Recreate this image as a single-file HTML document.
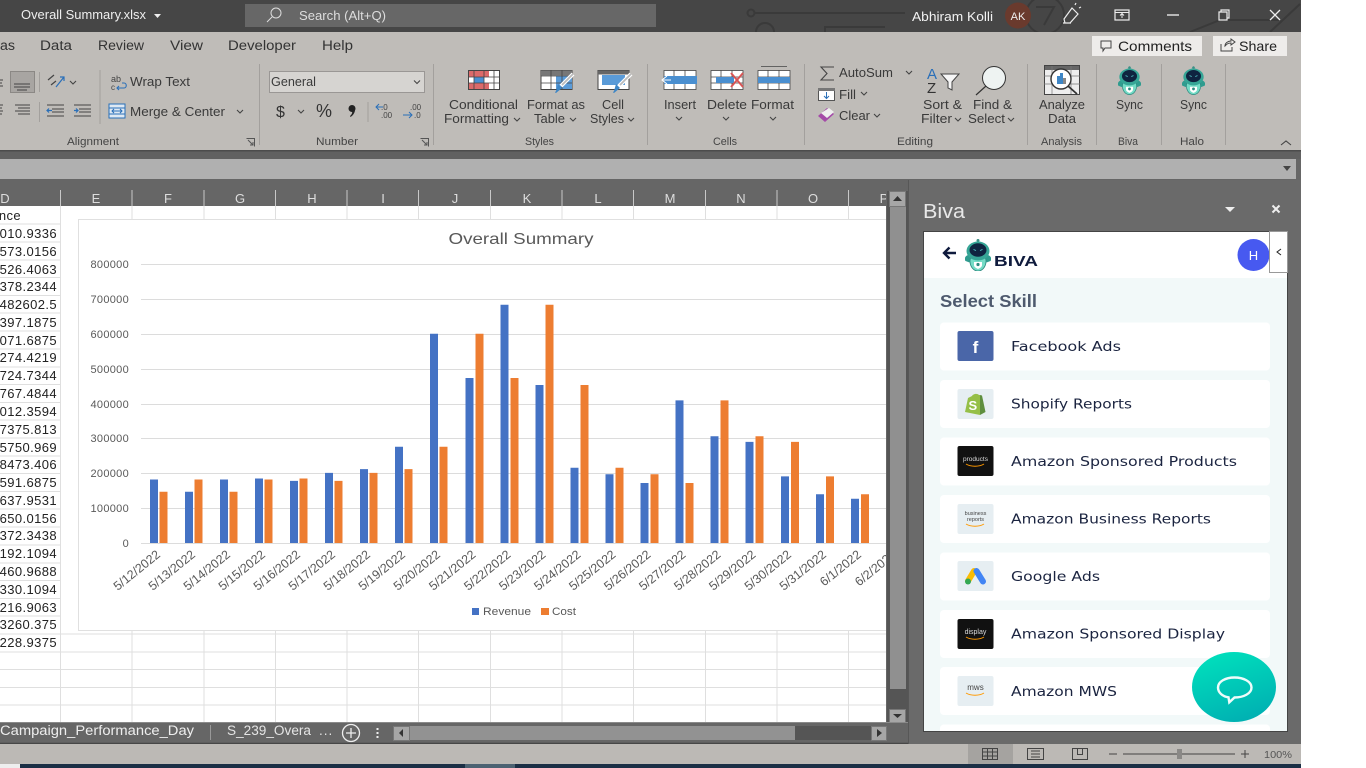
<!DOCTYPE html>
<html><head><meta charset="utf-8"><title>Overall Summary.xlsx</title>
<style>
html,body{margin:0;padding:0;background:#fff;overflow:hidden}
svg{display:block;font-family:"Liberation Sans",sans-serif}
.r{fill:#3a3a3a;font-size:12.5px}
.g{fill:#444;font-size:11px}
.tab{fill:#333;font-size:13.5px}
.cell{fill:#222;font-size:13px;letter-spacing:.4px;text-anchor:end}
.hd{fill:#ddd;font-size:13px;text-anchor:middle}
.yl{fill:#595959;font-size:11px;text-anchor:end;letter-spacing:.3px}
.dt{fill:#595959;font-size:12.5px;text-anchor:end}
.sk{fill:#1b2440;font-family:"DejaVu Sans",sans-serif;font-size:13.5px}
.ch{fill:none;stroke:#444;stroke-width:1.1}
</style></head><body>
<svg width="1366" height="768" viewBox="0 0 1366 768" xmlns="http://www.w3.org/2000/svg">
<defs>
<path id="c" class="ch" d="M0 0l3 3 3-3"/>
<linearGradient id="fab" x1="0.3" y1="0" x2="0.7" y2="1"><stop offset="0" stop-color="#00dfbc"/><stop offset="1" stop-color="#00afb2"/></linearGradient>
<symbol id="bot" viewBox="0 0 26 32">
<path d="M13 0v4" stroke="#3e8f86" stroke-width="1.2"/><circle cx="13" cy="1.5" r="1.5" fill="#3e8f86"/>
<path d="M3 16c-3 1-4 4-2.500 6l4 1.500 2-6zM23 16c3 1 4 4 2.500 6l-4 1.500-2-6z" fill="#2f9c8f"/>
<path d="M5.500 19h15c2 7-2.500 13-7.500 13S3.500 26 5.500 19z" fill="#74dcc6" stroke="#2d8a80" stroke-width=".8"/>
<ellipse cx="13" cy="12" rx="11.500" ry="9.500" fill="#36a596"/>
<ellipse cx="13" cy="11" rx="8.500" ry="6.800" fill="#0f2440"/>
<path d="M8.500 10.500l2.500 1M17.500 10.500l-2.500 1" stroke="#5cc" stroke-width=".9"/>
<path d="M9 23h8v3c0 2-2 3-4 4-2-1-4-2-4-4z" fill="#fff"/><circle cx="13" cy="25.500" r="1.600" fill="#2d8a80"/>
</symbol>
</defs>

<rect width="1366" height="768" fill="#fff"/>
<!-- title bar -->
<rect width="1301" height="32" fill="#464646"/>
<g fill="none" stroke="#3a3a3a" stroke-width="2">
<path d="M755 13H905M825 32V27h60M1190 32l30-12h60M1270 32l30-28"/>
<circle cx="751" cy="13" r="3.500"/><circle cx="765" cy="32" r="9"/><circle cx="1045" cy="15" r="19"/><path d="M1036 7h18l-10 18"/>
</g>
<rect x="245" y="4" width="411" height="23" fill="#676767"/>
<circle cx="276" cy="13" r="5" fill="none" stroke="#ddd" stroke-width="1"/><path d="M272 17l-5 5" stroke="#ddd" stroke-width="1"/>
<text x="21" y="19" fill="#eee" font-size="12.500" textLength="125" lengthAdjust="spacingAndGlyphs">Overall Summary.xlsx</text>
<path d="M154 14h7l-3.500 4z" fill="#eee"/>
<text x="299" y="20" fill="#ddd" font-size="12.500" textLength="87" lengthAdjust="spacingAndGlyphs">Search (Alt+Q)</text>
<text x="912" y="21" fill="#f2f2f2" font-size="12.500" textLength="81" lengthAdjust="spacingAndGlyphs">Abhiram Kolli</text>
<circle cx="1018" cy="15.500" r="13" fill="#6a3a2d"/>
<text x="1018" y="20" fill="#eee" font-size="11" text-anchor="middle">AK</text>
<path d="M1064 19l8-11 6 6-8 9h-5zM1063 23l8 0M1075 5l1-2M1079 8l2-1" fill="none" stroke="#eee" stroke-width="1.200"/>
<rect x="1115" y="10" width="14" height="10" fill="none" stroke="#eee" stroke-width="1.200"/><path d="M1115 12.500h14M1122 18v-4M1120 15.500l2-2 2 2" fill="none" stroke="#eee"/>
<path d="M1167 15h12" stroke="#ddd" stroke-width="1.500"/>
<path d="M1219 12h8v8h-8zM1221 12v-2h8v8h-2" fill="none" stroke="#eee" stroke-width="1.200"/>
<path d="M1270 10l10 10M1280 10l-10 10" stroke="#eee" stroke-width="1.300"/>

<!-- ribbon -->
<rect y="32" width="1301" height="118" fill="#bfbcb8"/>
<text x="0" y="50" class="tab" textLength="15" lengthAdjust="spacingAndGlyphs">as</text>
<text x="40" y="50" class="tab" textLength="32" lengthAdjust="spacingAndGlyphs">Data</text>
<text x="98" y="50" class="tab" textLength="46" lengthAdjust="spacingAndGlyphs">Review</text>
<text x="170" y="50" class="tab" textLength="33" lengthAdjust="spacingAndGlyphs">View</text>
<text x="228" y="50" class="tab" textLength="68" lengthAdjust="spacingAndGlyphs">Developer</text>
<text x="322" y="50" class="tab" textLength="31" lengthAdjust="spacingAndGlyphs">Help</text>

<rect x="1092" y="36" width="110" height="20" fill="#eeecea"/>
<rect x="1213" y="36" width="74" height="20" fill="#eeecea"/>
<path d="M1101 41h10v7h-6l-2 3v-3h-2z" fill="none" stroke="#444"/>
<path d="M1221 44v7h11v-4M1225 46c0-3 3-5 6-5v-2l4 3-4 3v-2c-3 0-4 1-6 3z" fill="none" stroke="#444"/>
<text x="1118" y="51" fill="#222" font-size="14" textLength="74" lengthAdjust="spacingAndGlyphs">Comments</text>
<text x="1239" y="51" fill="#222" font-size="14" textLength="38" lengthAdjust="spacingAndGlyphs">Share</text>

<g stroke="#a3a09d" stroke-width="1">
<path d="M39.500 72v20M39.500 102v20M100 70v54M259.500 64v81M368 102v20M433.500 64v81M647.500 64v81M804.500 64v81M1027.500 64v81M1096.500 64v81M1161.500 64v81M1225.500 64v81"/>
</g>

<!-- alignment -->
<rect x="10.500" y="71.500" width="24" height="21" fill="#a8a5a2" stroke="#8b8885"/>
<path d="M14 84h16M14 87h16M17 90h10M0 80h3M0 83h2M0 86h3" stroke="#444" stroke-width="1"/>
<path d="M0 105h3M0 108h2M0 111h3M0 114h2M15 105h15M18 108h12M15 111h15M18 114h12" stroke="#444" stroke-width="1"/>
<path d="M47 105h17M52 109h12M52 112h12M47 116h17M74 105h17M79 109h12M79 112h12M74 116h17" stroke="#444"/>
<path d="M52 110.500h-5M49 108.500l-2 2 2 2M78 110.500h-4M76 108.500l2 2-2 2" stroke="#2a6fb8" fill="none" stroke-width="1.200"/>
<path d="M48 80l6-5M51 85l5-4" stroke="#444" stroke-width="1.200"/><path d="M56 87l8-10M60 77h4v4" stroke="#2a6fb8" fill="none" stroke-width="1.200"/>
<use href="#c" x="70" y="81"/>
<text x="111" y="82" fill="#444" font-size="9">ab</text><text x="111" y="90" fill="#444" font-size="8">c</text>
<path d="M117 88h7c3 0 3-5 0-5h-2M119 86l-2 2 2 2" fill="none" stroke="#2a6fb8" stroke-width="1.100"/>
<text x="130" y="86" class="r" textLength="60" lengthAdjust="spacingAndGlyphs">Wrap Text</text>
<rect x="109" y="104" width="16" height="14" fill="#dfe9f3" stroke="#2a6fb8"/><path d="M109 108h16M109 114h16" stroke="#2a6fb8"/><path d="M112 111h10M114 109l-2 2 2 2M120 109l2 2-2 2" stroke="#2a6fb8" fill="none"/>
<text x="130" y="116" class="r" textLength="95" lengthAdjust="spacingAndGlyphs">Merge &amp; Center</text>
<use href="#c" x="237" y="110"/>
<text x="67" y="145" class="g" textLength="52" lengthAdjust="spacingAndGlyphs">Alignment</text>
<path d="M246.500 138.500h8v8M248 140l5 5M250 145h3v-3" fill="none" stroke="#555"/>

<!-- number -->
<rect x="269.500" y="71.500" width="155" height="21" fill="#d6d4d1" stroke="#9a9795"/>
<text x="271" y="86" class="r" textLength="45" lengthAdjust="spacingAndGlyphs">General</text>
<use href="#c" x="414" y="80.500"/>
<text x="276" y="117" fill="#333" font-size="16">$</text><use href="#c" x="298" y="110"/>
<text x="316" y="117" fill="#333" font-size="18">%</text>
<circle cx="352" cy="108.500" r="3.500" fill="#222"/><path d="M355 108c.5 4-1.500 7-4.500 9l-.5-1c2-1.500 2.500-3.500 2-5z" fill="#222"/>
<text x="381" y="110" fill="#444" font-size="8">.0</text><text x="381" y="118" fill="#444" font-size="8">.00</text>
<path d="M383 107h-7M379 104l-3 3 3 3" fill="none" stroke="#2a6fb8"/>
<text x="410" y="110" fill="#444" font-size="8">.00</text><text x="414" y="118" fill="#444" font-size="8">.0</text>
<path d="M403 115h9M409 112l3 3-3 3" fill="none" stroke="#2a6fb8"/>
<text x="316" y="145" class="g" textLength="42" lengthAdjust="spacingAndGlyphs">Number</text>
<path d="M420.500 138.500h8v8M422 140l5 5M424 145h3v-3" fill="none" stroke="#555"/>

<!-- styles -->
<rect x="468.500" y="70.500" width="31" height="19" fill="#fff" stroke="#444"/>
<rect x="469" y="71" width="20" height="6" fill="#dc6a6a"/><rect x="474" y="77" width="10" height="6" fill="#4a8fd0"/><rect x="469" y="83" width="20" height="6" fill="#dc6a6a"/>
<path d="M474 70v20M484 70v20M494 70v20M468 77h31M468 83h31" stroke="#444" stroke-width=".8"/>
<rect x="541" y="70.500" width="31" height="19" fill="#fff" stroke="#444"/><rect x="541" y="70.500" width="31" height="5" fill="#777"/>
<rect x="556" y="76" width="16" height="13" fill="#5a9bd8"/>
<path d="M551 70v20M562 70v20M541 76h31M541 83h31" stroke="#444" stroke-width=".8"/>
<path d="M573 74l-12 12" stroke="#fff" stroke-width="4"/><path d="M573 74l-11 11" stroke="#bbb" stroke-width="1.800"/><path d="M558 84l4 4-6 5c-1 0-1-1 0-2z" fill="#3e86c6"/>
<rect x="598" y="70.500" width="31" height="19" fill="#fff" stroke="#444"/><rect x="598" y="70.500" width="31" height="4" fill="#666"/>
<rect x="602" y="75" width="23" height="10" fill="#5a9bd8"/>
<path d="M631 74l-12 12" stroke="#fff" stroke-width="4"/><path d="M631 74l-11 11" stroke="#bbb" stroke-width="1.800"/><path d="M616 84l4 4-6 5c-1 0-1-1 0-2z" fill="#3e86c6"/>
<text x="449" y="109" class="r" textLength="69" lengthAdjust="spacingAndGlyphs">Conditional</text>
<text x="444" y="123" class="r" textLength="65" lengthAdjust="spacingAndGlyphs">Formatting</text><use href="#c" x="514" y="118"/>
<text x="527" y="109" class="r" textLength="58" lengthAdjust="spacingAndGlyphs">Format as</text>
<text x="534" y="123" class="r" textLength="31" lengthAdjust="spacingAndGlyphs">Table</text><use href="#c" x="570" y="118"/>
<text x="602" y="109" class="r" textLength="22" lengthAdjust="spacingAndGlyphs">Cell</text>
<text x="590" y="123" class="r" textLength="34" lengthAdjust="spacingAndGlyphs">Styles</text><use href="#c" x="628" y="118"/>
<text x="525" y="145" class="g" textLength="29" lengthAdjust="spacingAndGlyphs">Styles</text>

<!-- cells -->
<g stroke="#444" stroke-width=".8">
<rect x="664" y="70.500" width="32" height="19" fill="#fff"/><path d="M664 77h32M664 83h32M674 70v20M685 70v20"/>
<rect x="711" y="70.500" width="32" height="19" fill="#fff"/><path d="M711 77h32M711 83h32M721 70v20M732 70v20"/>
<rect x="758" y="70.500" width="32" height="19" fill="#fff"/><path d="M758 77h32M758 83h32M768 70v20M779 70v20M761 66.500h26"/>
</g>
<path d="M664 76h33v8h-33z" fill="#4a8fd0"/><path d="M671 80h-8M667 76l-5 4 5 4" fill="none" stroke="#fff"/>
<path d="M716 77h18v6h-18z" fill="#4a8fd0"/><path d="M731 73l12 14M743 73l-12 14" stroke="#d85555" stroke-width="2"/>
<path d="M758 77h32v6h-32z" fill="#4a8fd0"/>
<text x="664" y="109" class="r" textLength="32" lengthAdjust="spacingAndGlyphs">Insert</text><use href="#c" x="676" y="117"/>
<text x="707" y="109" class="r" textLength="40" lengthAdjust="spacingAndGlyphs">Delete</text><use href="#c" x="723" y="117"/>
<text x="751" y="109" class="r" textLength="43" lengthAdjust="spacingAndGlyphs">Format</text><use href="#c" x="770" y="117"/>
<text x="713" y="145" class="g" textLength="24" lengthAdjust="spacingAndGlyphs">Cells</text>

<!-- editing -->
<path d="M834 67h-13l6 6.500-6 6.500h13" fill="none" stroke="#444" stroke-width="1.100"/>
<text x="839" y="77" class="r" textLength="54" lengthAdjust="spacingAndGlyphs">AutoSum</text><use href="#c" x="906" y="71"/>
<rect x="818.500" y="88.500" width="16" height="12" fill="#fff" stroke="#555"/><rect x="818" y="88" width="17" height="3" fill="#777"/><path d="M826.500 92v6M824 96l2.500 2.500 2.500-2.500" fill="none" stroke="#2a6fb8"/>
<text x="839" y="99" class="r" textLength="17" lengthAdjust="spacingAndGlyphs">Fill</text><use href="#c" x="861" y="92"/>
<path d="M818 116l9-8 7 6-9 8z" fill="#a44aa8"/><path d="M821 113l6 5 7-6-5-4z" fill="#eee"/>
<text x="839" y="120" class="r" textLength="31" lengthAdjust="spacingAndGlyphs">Clear</text><use href="#c" x="874" y="114"/>
<text x="927" y="79" fill="#2a6fb8" font-size="15">A</text><text x="927" y="93" fill="#333" font-size="15">Z</text>
<path d="M941 74h18l-7 8v8l-4-2v-6z" fill="#f6f6f6" stroke="#444"/>
<circle cx="994" cy="78" r="11.500" fill="#eef3f2" stroke="#333"/><path d="M986 86l-10 9" stroke="#333" stroke-width="1.200"/>
<text x="923" y="109" class="r" textLength="39" lengthAdjust="spacingAndGlyphs">Sort &amp;</text>
<text x="921" y="123" class="r" textLength="31" lengthAdjust="spacingAndGlyphs">Filter</text><use href="#c" x="955" y="118"/>
<text x="973" y="109" class="r" textLength="39" lengthAdjust="spacingAndGlyphs">Find &amp;</text>
<text x="968" y="123" class="r" textLength="37" lengthAdjust="spacingAndGlyphs">Select</text><use href="#c" x="1008" y="118"/>
<text x="897" y="145" class="g" textLength="36" lengthAdjust="spacingAndGlyphs">Editing</text>

<!-- analyze -->
<rect x="1044.500" y="65.500" width="35" height="29" fill="#eee" stroke="#444"/><rect x="1045" y="66" width="34" height="4" fill="#666"/>
<path d="M1044 76h36M1044 84h36M1052 66v28M1071 66v28" stroke="#777" stroke-width=".7"/>
<circle cx="1061" cy="79" r="10" fill="#fff" stroke="#333" stroke-width="1.400"/>
<path d="M1057 76h3v8h-3zM1060 73h3v11h-3z" fill="#3e86c6"/><path d="M1063 78h3v6h-3z" fill="#888"/>
<path d="M1068 86l9 8" stroke="#333" stroke-width="1.800"/>
<text x="1039" y="109" class="r" textLength="46" lengthAdjust="spacingAndGlyphs">Analyze</text>
<text x="1048" y="123" class="r" textLength="28" lengthAdjust="spacingAndGlyphs">Data</text>
<text x="1041" y="145" class="g" textLength="41" lengthAdjust="spacingAndGlyphs">Analysis</text>

<use href="#bot" x="1118" y="66" width="23" height="29"/>
<use href="#bot" x="1182" y="66" width="23" height="29"/>
<text x="1116" y="109" class="r" textLength="27" lengthAdjust="spacingAndGlyphs">Sync</text>
<text x="1180" y="109" class="r" textLength="27" lengthAdjust="spacingAndGlyphs">Sync</text>
<text x="1118" y="145" class="g" textLength="20" lengthAdjust="spacingAndGlyphs">Biva</text>
<text x="1180" y="145" class="g" textLength="24" lengthAdjust="spacingAndGlyphs">Halo</text>
<path d="M1281 145l5-4 5 4" fill="none" stroke="#444" stroke-width="1.100"/>

<!-- dark band + formula -->
<rect y="150" width="1301" height="594" fill="#666"/>
<rect y="150" width="1301" height="1.500" fill="#4c4c4c"/>
<rect y="151.500" width="1301" height="7.500" fill="#616161"/>
<rect y="159" width="1296" height="20" fill="#b0b0b0"/>
<path d="M1283 166h8l-4 5z" fill="#444"/>

<!-- headers -->
<rect y="180" width="886" height="26" fill="#666"/>
<path d="M60.500 190v16M132 190v16M204 190v16M275.500 190v16M347 190v16M418.500 190v16M490.500 190v16M562 190v16M633.500 190v16M705.500 190v16M777 190v16M848.500 190v16" stroke="#c8c8c8" stroke-width="1"/>
<g class="hd"><text x="5" y="203" class="hd">D</text><text x="96" y="203" class="hd">E</text><text x="168" y="203" class="hd">F</text><text x="240" y="203" class="hd">G</text><text x="312" y="203" class="hd">H</text><text x="383" y="203" class="hd">I</text><text x="455" y="203" class="hd">J</text><text x="527" y="203" class="hd">K</text><text x="598" y="203" class="hd">L</text><text x="670" y="203" class="hd">M</text><text x="741" y="203" class="hd">N</text><text x="813" y="203" class="hd">O</text><text x="884" y="203" class="hd">P</text></g>
<rect x="886" y="180" width="23" height="26" fill="#666"/>

<!-- grid -->
<rect y="206" width="886" height="516" fill="#fff"/>
<path d="M0 224h60M0 242h60M0 260h60M0 277.500h60M0 295.500h60M0 313h60M0 331h60M0 349h60M0 367h60M0 384.500h60M0 402.500h60M0 420h60M0 438h60M0 456h60M0 473.500h60M0 491.500h60M0 509h60M0 527h60M0 545h60M0 563h60M0 580.500h60M0 598.500h60M0 616h60M0 634h886M0 652h886M0 669.500h886M0 687.500h886M0 705h886" stroke="#dfdfdf" fill="none"/>
<path d="M60.500 206v516M132 206v516M204 206v516M275.500 206v516M347 206v516M418.500 206v516M490.500 206v516M562 206v516M633.500 206v516M705.500 206v516M777 206v516M848.500 206v516" stroke="#dfdfdf"/>

<g>
<text x="21" y="220" class="cell">nce</text>
<text x="57" y="238" class="cell">010.9336</text>
<text x="57" y="256" class="cell">573.0156</text>
<text x="57" y="274" class="cell">526.4063</text>
<text x="57" y="291" class="cell">378.2344</text>
<text x="57" y="309" class="cell">482602.5</text>
<text x="57" y="327" class="cell">397.1875</text>
<text x="57" y="345" class="cell">071.6875</text>
<text x="57" y="362" class="cell">274.4219</text>
<text x="57" y="380" class="cell">724.7344</text>
<text x="57" y="398" class="cell">767.4844</text>
<text x="57" y="416" class="cell">012.3594</text>
<text x="57" y="434" class="cell">7375.813</text>
<text x="57" y="452" class="cell">5750.969</text>
<text x="57" y="469" class="cell">8473.406</text>
<text x="57" y="487" class="cell">591.6875</text>
<text x="57" y="505" class="cell">637.9531</text>
<text x="57" y="523" class="cell">650.0156</text>
<text x="57" y="540" class="cell">372.3438</text>
<text x="57" y="558" class="cell">192.1094</text>
<text x="57" y="576" class="cell">460.9688</text>
<text x="57" y="594" class="cell">330.1094</text>
<text x="57" y="612" class="cell">216.9063</text>
<text x="57" y="629" class="cell">3260.375</text>
<text x="57" y="647" class="cell">228.9375</text>
</g>

<!-- chart -->
<svg x="0" y="0" width="886" height="768" overflow="hidden">
<rect x="78.500" y="219.500" width="830" height="411" fill="#fff" stroke="#e0e0e0"/>
<path d="M141 264.500h745M141 299.500h745M141 334.500h745M141 369.500h745M141 404.500h745M141 438.500h745M141 473.500h745M141 508.500h745M141 543.500h745" stroke="#dcdcdc"/>
<text x="521" y="244" fill="#595959" font-size="16" text-anchor="middle" textLength="145" lengthAdjust="spacingAndGlyphs">Overall Summary</text>
<text x="129" y="268" class="yl">800000</text><text x="129" y="303" class="yl">700000</text><text x="129" y="338" class="yl">600000</text><text x="129" y="373" class="yl">500000</text><text x="129" y="408" class="yl">400000</text><text x="129" y="442" class="yl">300000</text><text x="129" y="477" class="yl">200000</text><text x="129" y="512" class="yl">100000</text><text x="129" y="547" class="yl">0</text>
<path fill="#4472c4" d="M150 479.500h8V543h-8zM185 491.700h8V543h-8zM220 479.500h8V543h-8zM255 478.500h8V543h-8zM290 480.900h8V543h-8zM325 472.900h8V543h-8zM360 469.100h8V543h-8zM395 446.700h8V543h-8zM430 333.700h8V543h-8zM465.500 378h8V543h-8zM500.500 304.800h8V543h-8zM535.500 385h8V543h-8zM570.500 467.700h8V543h-8zM605.500 474.300h8V543h-8zM640.500 483h8V543h-8zM675.500 400.400h8V543h-8zM710.500 436.300h8V543h-8zM745.500 441.900h8V543h-8zM781 476.400h8V543h-8zM816 494.200h8V543h-8zM851 498.700h8V543h-8z"/>
<path fill="#ed7d31" d="M159.500 491.700h8V543h-8zM194.500 479.500h8V543h-8zM229.500 491.700h8V543h-8zM264.500 479.500h8V543h-8zM299.500 478.500h8V543h-8zM334.500 480.900h8V543h-8zM369.500 472.900h8V543h-8zM404.500 469.100h8V543h-8zM439.500 446.700h8V543h-8zM475.500 333.700h8V543h-8zM510.500 378h8V543h-8zM545.500 304.800h8V543h-8zM580.500 385h8V543h-8zM615.500 467.700h8V543h-8zM650.500 474.300h8V543h-8zM685.500 483h8V543h-8zM720.500 400.400h8V543h-8zM755.500 436.300h8V543h-8zM791 441.900h8V543h-8zM826 476.400h8V543h-8zM861 494.200h8V543h-8z"/>
<g>
<text class="dt" transform="translate(161,556) rotate(-39)">5/12/2022</text>
<text class="dt" transform="translate(196,556) rotate(-39)">5/13/2022</text>
<text class="dt" transform="translate(231,556) rotate(-39)">5/14/2022</text>
<text class="dt" transform="translate(266,556) rotate(-39)">5/15/2022</text>
<text class="dt" transform="translate(301,556) rotate(-39)">5/16/2022</text>
<text class="dt" transform="translate(336,556) rotate(-39)">5/17/2022</text>
<text class="dt" transform="translate(371,556) rotate(-39)">5/18/2022</text>
<text class="dt" transform="translate(406,556) rotate(-39)">5/19/2022</text>
<text class="dt" transform="translate(441,556) rotate(-39)">5/20/2022</text>
<text class="dt" transform="translate(476.500,556) rotate(-39)">5/21/2022</text>
<text class="dt" transform="translate(511.500,556) rotate(-39)">5/22/2022</text>
<text class="dt" transform="translate(546.500,556) rotate(-39)">5/23/2022</text>
<text class="dt" transform="translate(581.500,556) rotate(-39)">5/24/2022</text>
<text class="dt" transform="translate(616.500,556) rotate(-39)">5/25/2022</text>
<text class="dt" transform="translate(651.500,556) rotate(-39)">5/26/2022</text>
<text class="dt" transform="translate(686.500,556) rotate(-39)">5/27/2022</text>
<text class="dt" transform="translate(721.500,556) rotate(-39)">5/28/2022</text>
<text class="dt" transform="translate(756.500,556) rotate(-39)">5/29/2022</text>
<text class="dt" transform="translate(792,556) rotate(-39)">5/30/2022</text>
<text class="dt" transform="translate(827,556) rotate(-39)">5/31/2022</text>
<text class="dt" transform="translate(862,556) rotate(-39)">6/1/2022</text>
<text class="dt" transform="translate(897,556) rotate(-39)">6/2/2022</text>
</g>
<rect x="472" y="608" width="7" height="7" fill="#4472c4"/><text x="483" y="615" fill="#595959" font-size="11" textLength="48" lengthAdjust="spacingAndGlyphs">Revenue</text>
<rect x="541" y="608" width="8" height="7" fill="#ed7d31"/><text x="552" y="615" fill="#595959" font-size="11" textLength="24" lengthAdjust="spacingAndGlyphs">Cost</text>
</svg>

<!-- vscroll -->
<rect x="887" y="191" width="21" height="531" fill="#555"/>
<rect x="889.500" y="191.500" width="16" height="15" fill="#a6a6a6" stroke="#777"/><path d="M893 201h9l-4.500-5z" fill="#333"/>
<rect x="890" y="207" width="16" height="482" fill="#909090"/>
<rect x="889.500" y="709.500" width="16" height="13" fill="#a6a6a6" stroke="#777"/><path d="M893 714h9l-4.500 4z" fill="#333"/>

<!-- sheet tabs -->
<rect y="722" width="909" height="22" fill="#666"/>
<path d="M0 743.500h909" stroke="#474747" stroke-width="1.500"/>
<path d="M0 722.500h909" stroke="#8a8a8a"/>
<text x="0" y="735" fill="#eee" font-size="13.500" textLength="194" lengthAdjust="spacingAndGlyphs">Campaign_Performance_Day</text>
<path d="M210.500 725v15" stroke="#999"/>
<text x="227" y="735" fill="#e5e5e5" font-size="13.500" textLength="84" lengthAdjust="spacingAndGlyphs">S_239_Overa</text>
<text x="319" y="735" fill="#e5e5e5" font-size="13.500" letter-spacing="1">...</text>
<circle cx="351" cy="733" r="8.500" fill="none" stroke="#eee" stroke-width="1.300"/><path d="M346 733h10M351 728v10" stroke="#eee" stroke-width="1.300"/>
<path d="M377.500 728v2M377.500 732v2M377.500 736v2" stroke="#eee" stroke-width="2"/>
<rect x="393" y="726" width="493" height="14" fill="#555"/>
<rect x="393.500" y="726.500" width="16" height="14" fill="#a6a6a6" stroke="#777"/><path d="M403 729v8l-4-4z" fill="#333"/>
<rect x="410" y="726" width="385" height="14" fill="#929292"/>
<rect x="871.500" y="726.500" width="15" height="14" fill="#a6a6a6" stroke="#777"/><path d="M877 729v8l5-4z" fill="#333"/>

<!-- status -->
<rect y="744" width="1301" height="20" fill="#bcb9b5"/>
<rect x="968" y="744" width="45" height="20" fill="#a5a3a0"/>
<path d="M982.500 748.500h15v11h-15zM982 752h16M982 756h16M987.500 748v12M992.500 748v12" fill="none" stroke="#444"/>
<path d="M1027.500 748.500h16v11h-16zM1031 751h9M1031 754h9M1031 757h9" fill="none" stroke="#444"/>
<path d="M1072.500 748.500h15v11h-15zM1077.500 748.500v6h5v-6" fill="none" stroke="#444"/>
<path d="M1109 754h8M1123 754h112M1241 754h8M1245 750v8" stroke="#444"/>
<rect x="1177" y="749" width="5" height="10" fill="#8a8886"/>
<text x="1264" y="758" fill="#555" font-size="10.500" textLength="28" lengthAdjust="spacingAndGlyphs">100%</text>

<!-- bottom -->
<rect x="20" y="764" width="1281" height="4" fill="#1b2f45"/>
<rect x="0" y="764" width="20" height="4" fill="#eee"/>
<rect x="465" y="764" width="50" height="4" fill="#4c6272"/>

<!-- task pane -->
<rect x="909" y="180" width="392" height="564" fill="#6a6a6a"/>
<path d="M908.500 180v564" stroke="#575757"/>
<text x="923" y="218" fill="#e8e8e8" font-size="20" textLength="42" lengthAdjust="spacingAndGlyphs">Biva</text>
<path d="M1225 207h10l-5 5z" fill="#eee"/>
<path d="M1272.500 205.500l7 7M1279.500 205.500l-7 7" stroke="#eee" stroke-width="2"/>
<rect x="923.500" y="231.500" width="364" height="500" fill="#f2f9f9" stroke="#444"/>
<rect x="924" y="232" width="363" height="46" fill="#fff"/>
<path d="M956 253h-11M949.500 247.500l-5.500 5.500 5.500 5.500" fill="none" stroke="#0f1b3d" stroke-width="2.400"/>
<use href="#bot" x="965" y="239" width="26" height="32"/>
<text x="994" y="266" fill="#0f1b3d" font-size="15" font-weight="bold" textLength="44" lengthAdjust="spacingAndGlyphs">BIVA</text>
<circle cx="1253.500" cy="255" r="16" fill="#4759f0"/>
<text x="1253.500" y="260" fill="#fff" font-size="13" text-anchor="middle">H</text>
<rect x="1269.500" y="231.500" width="18" height="41" fill="#fff" stroke="#999"/>
<path d="M1281 249l-4 3 4 3" fill="none" stroke="#222" stroke-width="1"/>
<text x="940" y="307" fill="#4e5a6e" font-size="17.500" font-weight="bold" textLength="97" lengthAdjust="spacingAndGlyphs">Select Skill</text>

<svg x="924" y="232" width="363" height="499" viewBox="924 232 363 499">
<g fill="#fff">
<rect x="940" y="322.500" width="330" height="48" rx="4"/><rect x="940" y="380" width="330" height="48" rx="4"/><rect x="940" y="437.500" width="330" height="48" rx="4"/><rect x="940" y="495" width="330" height="48" rx="4"/><rect x="940" y="552.500" width="330" height="48" rx="4"/><rect x="940" y="610" width="330" height="48" rx="4"/><rect x="940" y="667" width="330" height="48" rx="4"/><rect x="940" y="724.500" width="330" height="48" rx="4"/>
</g>
<rect x="957.500" y="331" width="36" height="30" rx="2" fill="#4a66a8"/>
<text x="975.500" y="353" fill="#fff" font-size="17" font-weight="bold" text-anchor="middle">f</text>
<rect x="957.500" y="389" width="36" height="30" rx="2" fill="#e6eef2"/>
<path d="M965 412l3-14 4-2c1-2 5-3 7-1l1 0 0 20z" fill="#95bf47"/><path d="M980 395l2 .5 3.500 16.500-5.500 3z" fill="#5e8e3e"/>
<text x="968.500" y="410" fill="#fff" font-size="13" font-weight="bold">S</text>
<rect x="957.500" y="446" width="36" height="30" rx="2" fill="#111"/>
<text x="975.500" y="461" fill="#ddd" font-size="6.500" text-anchor="middle">products</text><path d="M966 464c5 3 13 3 18 0" fill="none" stroke="#f90"/>
<rect x="957.500" y="504" width="36" height="30" rx="2" fill="#e6eef2"/>
<text x="975.500" y="515" fill="#444" font-size="5.500" text-anchor="middle">business</text><text x="975.500" y="521" fill="#444" font-size="5.500" text-anchor="middle">reports</text><path d="M966 524c5 3 13 3 18 0" fill="none" stroke="#f90"/>
<rect x="957.500" y="561" width="36" height="30" rx="2" fill="#e6eef2"/>
<path d="M974 571l-6 10" stroke="#fbbc04" stroke-width="6" stroke-linecap="round"/><path d="M976.500 571l6.500 10.500" stroke="#4285f4" stroke-width="6" stroke-linecap="round"/><circle cx="968" cy="581.500" r="3" fill="#34a853"/>
<rect x="957.500" y="619" width="36" height="30" rx="2" fill="#111"/>
<text x="975.500" y="634" fill="#ddd" font-size="7" text-anchor="middle">display</text><path d="M966 637c5 3 13 3 18 0" fill="none" stroke="#f90"/>
<rect x="957.500" y="676" width="36" height="30" rx="2" fill="#e6eef2"/>
<text x="975.500" y="690" fill="#444" font-size="8" text-anchor="middle">mws</text><path d="M966 693c5 3 13 3 18 0" fill="none" stroke="#f90"/>
<rect x="957.500" y="733" width="36" height="30" rx="2" fill="#e6eef2"/>
<text x="1011" y="351" class="sk" textLength="110" lengthAdjust="spacingAndGlyphs">Facebook Ads</text>
<text x="1011" y="408.500" class="sk" textLength="121" lengthAdjust="spacingAndGlyphs">Shopify Reports</text>
<text x="1011" y="466" class="sk" textLength="226" lengthAdjust="spacingAndGlyphs">Amazon Sponsored Products</text>
<text x="1011" y="523.500" class="sk" textLength="200" lengthAdjust="spacingAndGlyphs">Amazon Business Reports</text>
<text x="1011" y="581" class="sk" textLength="89" lengthAdjust="spacingAndGlyphs">Google Ads</text>
<text x="1011" y="638.500" class="sk" textLength="214" lengthAdjust="spacingAndGlyphs">Amazon Sponsored Display</text>
<text x="1011" y="696" class="sk" textLength="106" lengthAdjust="spacingAndGlyphs">Amazon MWS</text>
</svg>

<!-- chat fab -->
<ellipse cx="1234" cy="687" rx="42" ry="35" fill="url(#fab)"/>
<path d="M1234.500 677.500c-9 0-16.500 4-16.500 10 0 5 4.500 9 10.500 9.800l.8 5 5.200-4.800c9 0 17-4 17-10s-8-10-17-10z" fill="none" stroke="#eefcfa" stroke-width="2.400"/>
</svg>
</body></html>
